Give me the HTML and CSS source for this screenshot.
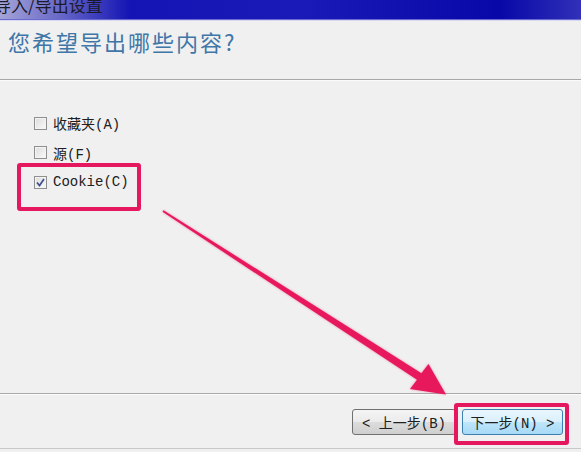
FILE: index.html
```html
<!DOCTYPE html>
<html>
<head>
<meta charset="utf-8">
<link rel="stylesheet" href="styles.css">
</head>
<body>
<div class="window">
  <div class="titlebar"><span class="title">导入/导出设置</span></div>
  <div class="header"><h1 class="heading">您希望导出哪些内容?</h1></div>
  <div class="sep"></div>
  <div class="content">
    <label class="row"><span class="cb"></span><span class="lbl">收藏夹(A)</span></label>
    <label class="row"><span class="cb"></span><span class="lbl">源(F)</span></label>
    <label class="row"><span class="cb checked"><svg viewBox="0 0 9 9" width="9" height="9"><path d="M1 4.5 L3.5 7.5 L8 1" fill="none" stroke="#3d4f8f" stroke-width="1.7"/></svg></span><span class="lbl">Cookie(C)</span></label>
  </div>
  <div class="sep"></div>
  <div class="footer">
    <button class="btn">&lt; 上一步(B)</button>
    <button class="btn primary">下一步(N) &gt;</button>
  </div>
  <div class="bottomline"></div>
</div>
<div class="mark mark-cookie"></div>
<div class="mark mark-next"></div>
<svg class="arrow" width="581" height="452" viewBox="0 0 581 452">
  <polygon points="163.5,210.2 421.4,373.2 428.5,364 446,394.5 410,389 417,379.8 162.5,211.8" fill="#e8185c"/>
</svg>
</body>
</html>
```
FILE: styles.css
```css
html, body { margin: 0; padding: 0; }
body {
  width: 581px; height: 452px; overflow: hidden;
  background: #f0f0f0;
  font-family: "Liberation Mono", "Noto Sans CJK SC", monospace;
  position: relative;
}
.window { display: flex; flex-direction: column; height: 452px; }
.titlebar {
  height: 19px; overflow: hidden;
  background: linear-gradient(90deg, #a4a4d8 0px, #6868c8 60px, #1414b4 130px, #1a1ab8 300px, #0808a8 500px, #3030b8 581px);
  border-bottom: 1px solid #6a6ad0;
  box-shadow: 0 1px 0 #d8d8f0;
}
.title {
  display: block; margin-top: -6px; margin-left: -6px;
  font-family: "Noto Sans CJK SC", sans-serif; font-size: 17px; line-height: 22px;
  color: #1a1a2a;
}
.header { height: 57px; padding: 4px 0 0 8px; box-sizing: border-box; margin-top: 2px; }
.heading {
  margin: 0; font-weight: normal;
  font-family: "Noto Sans CJK SC", sans-serif; font-size: 22px; line-height: 30px;
  color: #3f76a8; letter-spacing: 2px;
}
.sep { height: 1px; background: #a8a8a8; border-bottom: 1px solid #fbfbfb; }
.content {
  flex: 1; padding: 32px 0 0 34px;
  display: flex; flex-direction: column; gap: 9.5px;
}
.row { display: flex; align-items: center; height: 20px; gap: 6px; }
.cb {
  width: 11px; height: 11px; border: 1px solid #8e8f8f;
  background: linear-gradient(135deg, #dcdcdc, #fafafa);
  box-shadow: inset 0 0 0 1px #f4f4f4;
  display: flex; align-items: center; justify-content: center;
}
.lbl { font-size: 14px; color: #202020; }
.footer {
  height: 53px; display: flex; justify-content: flex-end; align-items: center;
  gap: 6px; padding-right: 18px;
}
.btn {
  height: 26px; width: 104px; padding: 0;
  font-family: "Liberation Mono", "Noto Sans CJK SC", monospace; font-size: 14px; color: #202020;
  border: 1px solid #707070; border-radius: 3px;
  background: linear-gradient(#f4f4f4, #ebebeb 50%, #dcdcdc 51%, #cfcfcf);
}
.btn.primary {
  width: 101px;
  border-color: #3c7fb1;
  background: linear-gradient(#eaf6fd, #d9f0fc 50%, #bee6fd 51%, #a7d9f5);
}
.bottomline { height: 1px; background: #c8c8c8; margin-bottom: 3px; }
.mark {
  position: absolute; border: 4px solid #e5175e; border-radius: 3px;
  box-sizing: border-box;
}
.mark-cookie { left: 17px; top: 163px; width: 124px; height: 48px; }
.mark-next { left: 454px; top: 403px; width: 115px; height: 42px; }
.arrow { position: absolute; left: 0; top: 0; filter: drop-shadow(0 0 1px rgba(230,30,90,0.5)); }
```
